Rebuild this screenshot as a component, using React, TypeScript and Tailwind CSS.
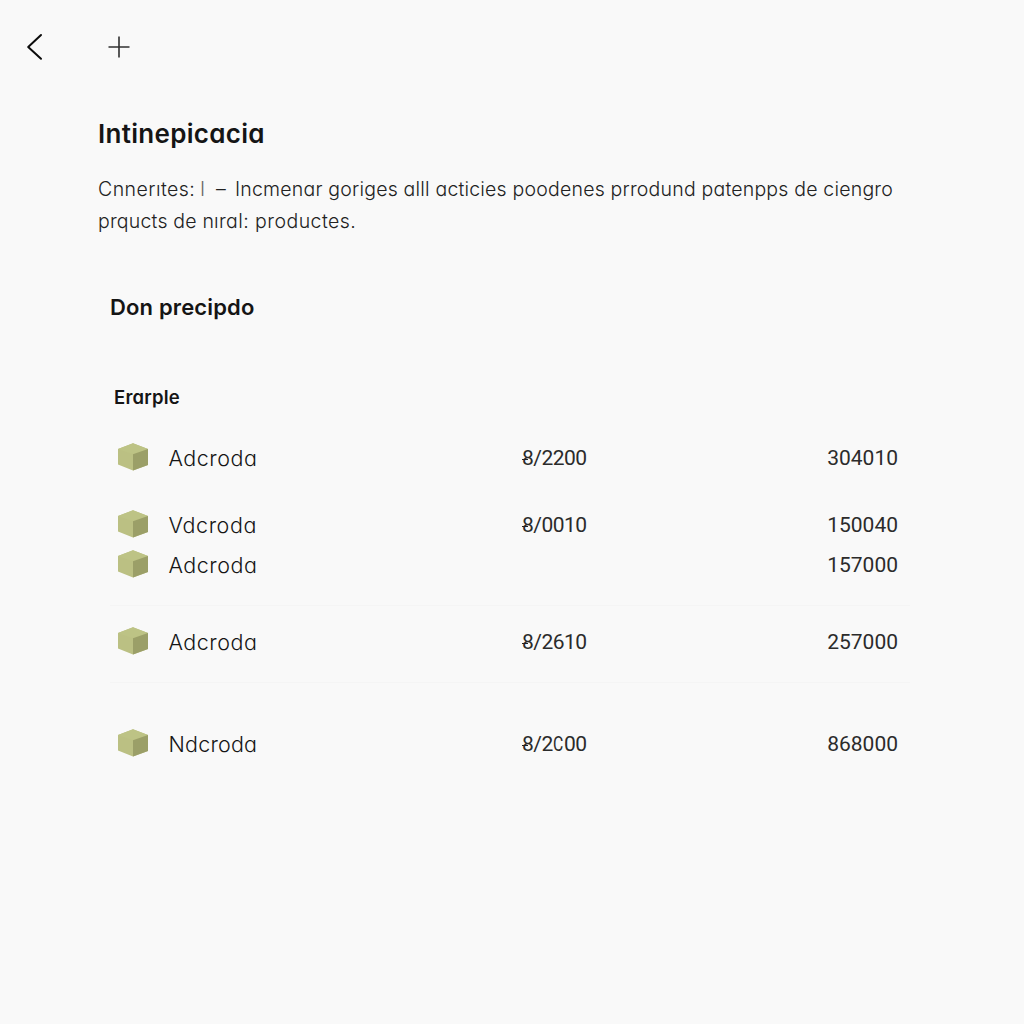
import clsx from "clsx";

type Row = {
  name: string;
  code?: string;
  amount: string;
  height: string;
  tracking: string;
  line?: boolean;
};

const rows: Row[] = [
  { name: "Adcroda", code: "8/2200", amount: "304010", height: "h-[67px]", tracking: "tracking-[0.5px]" },
  { name: "Vdcroda", code: "8/0010", amount: "150040", height: "h-[40px]", tracking: "tracking-[0.6px]" },
  { name: "Adcroda", amount: "157000", height: "h-[59px]", tracking: "tracking-[0.5px]", line: true },
  { name: "Adcroda", code: "8/2610", amount: "257000", height: "h-[77px] pt-[18px]", tracking: "tracking-[0.5px]", line: true },
  { name: "Ndcroda", code: "8/2C00", amount: "868000", height: "h-[84px] pt-[43px]", tracking: "tracking-[0.2px]" },
];

function BackIcon() {
  return (
    <svg className="h-7 w-5" viewBox="0 0 20 28" fill="none" stroke="#0c0c0c" strokeWidth="2" strokeLinecap="round" strokeLinejoin="round">
      <path d="M16 2 3.2 14 16 25.8" />
    </svg>
  );
}

function PlusIcon() {
  return (
    <svg className="size-6" viewBox="0 0 24 24" fill="none" stroke="#303030" strokeWidth="1.6">
      <path d="M12 1.5v21M1.5 12h21" />
    </svg>
  );
}

function Cube() {
  return (
    <svg className="h-[28px] w-[30px] shrink-0" viewBox="0 0 30 28">
      <path d="M15 .2 30 6v16L15 27.6 0 21.5V6z" fill="#bbc083" />
      <path d="M15 .2 30 6l-15 5.2L0 6z" fill="#bdc385" />
      <path d="M30 6v16l-15 5.6V11.2z" fill="#9b9f68" />
    </svg>
  );
}

function Code({ value }: { value: string }) {
  return (
    <span className="relative tracking-[-0.55px]">
      {value.split("").map((ch, i) => (
        <span key={i} className={clsx(ch === "C" && "inline-block w-[11.3px] origin-left scale-x-75")}>
          {ch}
        </span>
      ))}
      <span aria-hidden className="absolute top-[13px] left-0 h-px w-[6px] bg-[#222]" />
    </span>
  );
}

export default function App() {
  return (
    <div className="h-screen w-full overflow-hidden bg-[#f9f9f9] font-['Inter',sans-serif] text-[#151515] [font-feature-settings:'cv11','ss03']">
      <header className="flex h-[90px] items-center gap-[62px] pt-[4px] pl-[25px]">
        <button aria-label="Back">
          <BackIcon />
        </button>
        <button aria-label="Add">
          <PlusIcon />
        </button>
      </header>

      <main className="pl-[98px]">
        <h1 className="pt-[28px] text-[26px] leading-8 font-semibold tracking-[0.3px]">Intinepicacia</h1>
        <div className="mt-[23px] text-[19.5px] leading-8 font-light whitespace-nowrap text-[#222]">
          <p className="tracking-[0.2px]">
            <span className="tracking-[0.45px]">Cnnerıtes:</span>
            <span className="ml-[5px] text-[#666]">l</span>
            <span className="mr-[7px] ml-[9px] inline-block w-[14px] text-center">–</span>
            <span>Incmenar goriges alll acticies poodenes prrodund patenpps de ciengro</span>
          </p>
          <p className="tracking-[0.2px]">
            prqucts de nı<span className="tracking-[0.45px]">ral: productes.</span>
          </p>
        </div>

        <h2 className="mt-[54px] pl-[12px] text-[22px] leading-8 font-semibold tracking-[0.15px]">Don precipdo</h2>
        <h3 className="mt-[60px] pl-[16px] text-[18.5px] leading-7 font-semibold tracking-[0.2px]">Erarple</h3>

        <div className="mt-[29px] ml-[12px] w-[800px]">
          {rows.map((row, i) => (
            <div key={i} className={clsx("px-2", row.height, row.line && "border-b border-[#f5f5f5]")}>
              <div className="grid h-[32px] w-[780px] grid-cols-[30px_374px_1fr_auto] items-center">
                <Cube />
                <span className={clsx("pt-px pl-[20.5px] text-[21.5px] font-[350]", row.tracking)}>{row.name}</span>
                <span className="pt-[3px] font-['Roboto',sans-serif] text-[21px] text-[#2b2b2b]">{row.code && <Code value={row.code} />}</span>
                <span className="pt-[3px] font-['Roboto',sans-serif] text-[21px] text-[#2b2b2b]">{row.amount}</span>
              </div>
            </div>
          ))}
        </div>
      </main>
    </div>
  );
}
